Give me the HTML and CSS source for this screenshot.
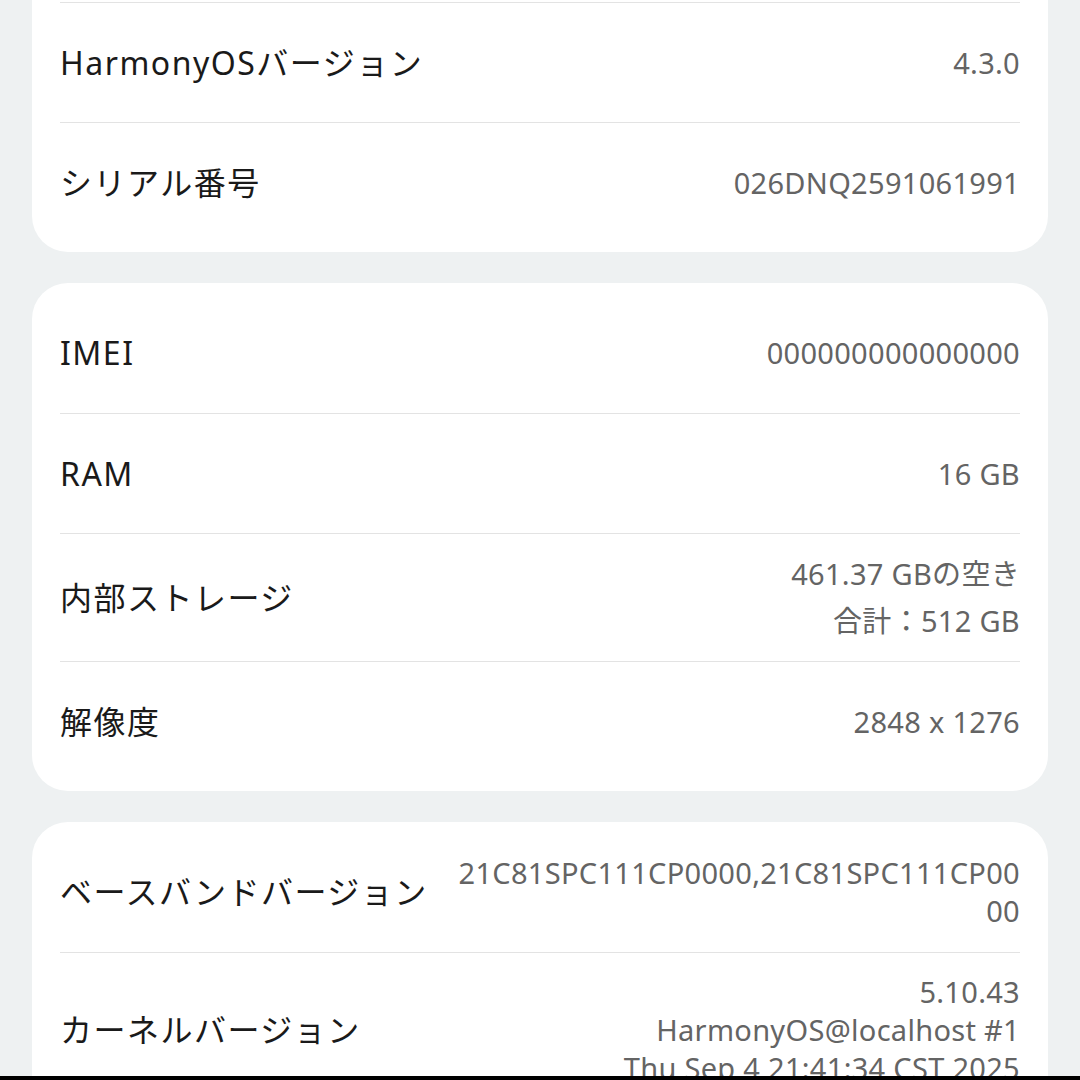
FILE: index.html
```html
<!DOCTYPE html>
<html lang="ja">
<head>
    <meta charset="UTF-8">
    <meta name="viewport" content="width=device-width, initial-scale=1.0">
    <title>デバイス情報</title>
    <link rel="stylesheet" href="styles.css">
</head>
<body>
    <div class="page">
        <div class="card card-cut">
            <div class="row">
                <span class="label">HarmonyOSバージョン</span>
                <span class="value">4.3.0</span>
            </div>
            <div class="row">
                <span class="label">シリアル番号</span>
                <span class="value">026DNQ2591061991</span>
            </div>
        </div>

        <div class="card">
            <div class="row">
                <span class="label">IMEI</span>
                <span class="value">000000000000000</span>
            </div>
            <div class="row">
                <span class="label">RAM</span>
                <span class="value">16 GB</span>
            </div>
            <div class="row">
                <span class="label">内部ストレージ</span>
                <span class="value value-split">
                    <span>461.37 GBの空き</span>
                    <span>合計：512 GB</span>
                </span>
            </div>
            <div class="row">
                <span class="label">解像度</span>
                <span class="value">2848 x 1276</span>
            </div>
        </div>

        <div class="card">
            <div class="row">
                <span class="label">ベースバンドバージョン</span>
                <span class="value value-wrap">21C81SPC111CP0000,21C81SPC111CP0000</span>
            </div>
            <div class="row">
                <span class="label">カーネルバージョン</span>
                <span class="value value-lines">
                    <span>5.10.43</span>
                    <span>HarmonyOS@localhost #1</span>
                    <span>Thu Sep 4 21:41:34 CST 2025</span>
                </span>
            </div>
        </div>
    </div>
    <div class="bottom-bar"></div>
</body>
</html>
```

FILE: styles.css
```css
body {
    margin: 0;
    padding: 0;
    background-color: #eef1f2;
    font-family: "Noto Sans", "Noto Sans CJK JP", sans-serif;
    overflow: hidden;
}
.page {
    display: flex;
    flex-direction: column;
    gap: 31px;
    padding: 0 32px;
}
.card {
    background-color: #fff;
    border-radius: 36px;
    padding: 10px 28px;
}
.card-cut {
    border-top-left-radius: 0;
    border-top-right-radius: 0;
    padding-top: 2px;
}
.card-cut .row:first-child {
    border-top: 1px solid #e3e3e3;
}
.row {
    display: flex;
    align-items: center;
    justify-content: space-between;
    gap: 22px;
    min-height: 120px;
    padding: 20px 0;
    box-sizing: border-box;
    border-top: 1px solid #e3e3e3;
}
.row:first-child {
    border-top: none;
}
.label {
    flex-shrink: 0;
    color: #1a1a1a;
    font-size: 32px;
    line-height: 40px;
    letter-spacing: 1.5px;
}
.value {
    color: #646464;
    font-size: 29px;
    line-height: 38px;
    letter-spacing: 0.3px;
    text-align: right;
}
.value-split {
    display: flex;
    flex-direction: column;
    align-items: flex-end;
    gap: 9px;
    padding: 1px 0;
}
.value-wrap {
    word-break: break-all;
}
.value-lines {
    display: flex;
    flex-direction: column;
    align-items: flex-end;
    white-space: nowrap;
}
.bottom-bar {
    position: fixed;
    left: 0;
    right: 0;
    bottom: 0;
    height: 4px;
    background-color: #000;
}
```
